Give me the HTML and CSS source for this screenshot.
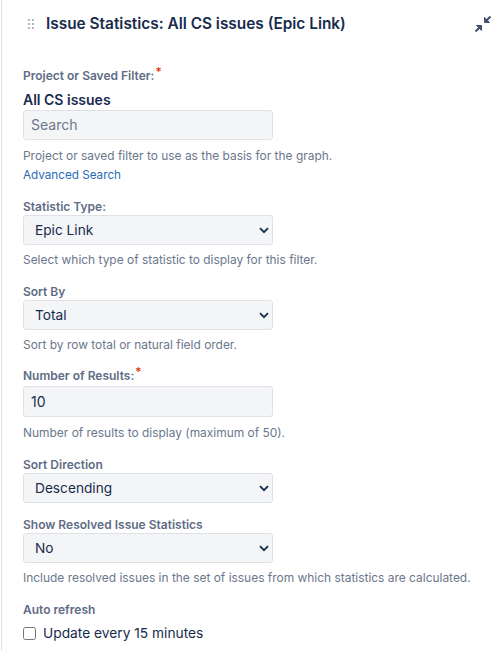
FILE: index.html
```html
<!DOCTYPE html>
<html lang="en">
<head>
<meta charset="utf-8">
<title>Issue Statistics</title>
<link rel="stylesheet" href="styles.css">
</head>
<body>
<main class="panel">
  <header class="head">
    <svg class="grip" width="6" height="10" viewBox="0 0 6 10"><g fill="#b3bac5"><rect x="0" y="0" width="2" height="2"/><rect x="4" y="0" width="2" height="2"/><rect x="0" y="4" width="2" height="2"/><rect x="4" y="4" width="2" height="2"/><rect x="0" y="8" width="2" height="2"/><rect x="4" y="8" width="2" height="2"/></g></svg>
    <h1 class="title">Issue Statistics: All CS issues (Epic Link)</h1>
    <svg class="collapse" width="16" height="16" viewBox="0 0 16 16"><g fill="#42526e" stroke="#42526e" stroke-linejoin="round"><path d="M9.5 1.5V6.5H14.5z" stroke-width="1"/><path d="M6.5 9.5H1.5L6.5 14.5z" stroke-width="1"/><path d="M15.5.5L11 5M.5 15.5L5 11" stroke-width="2"/></g></svg>
  </header>
  <form class="form">
    <div class="field f-project">
      <label class="label">Project or Saved Filter:<span class="req">*</span></label>
      <div class="picked">All CS issues</div>
      <input class="input" type="text" placeholder="Search">
      <p class="hint h-gap">Project or saved filter to use as the basis for the graph.</p>
      <a class="link" href="#">Advanced Search</a>
    </div>
    <div class="field f-type">
      <label class="label">Statistic Type:</label>
      <div class="select"><select><option>Epic Link</option></select><svg class="chev" width="10" height="7" viewBox="0 0 10 7"><path d="M1 1.2l4 4 4-4" fill="none" stroke="#172b4d" stroke-width="1.8"/></svg></div>
      <p class="hint">Select which type of statistic to display for this filter.</p>
    </div>
    <div class="field f-sort">
      <label class="label">Sort By</label>
      <div class="select"><select><option>Total</option></select><svg class="chev" width="10" height="7" viewBox="0 0 10 7"><path d="M1 1.2l4 4 4-4" fill="none" stroke="#172b4d" stroke-width="1.8"/></svg></div>
      <p class="hint">Sort by row total or natural field order.</p>
    </div>
    <div class="field f-num">
      <label class="label">Number of Results:<span class="req">*</span></label>
      <input class="input value" type="text" value="10">
      <p class="hint h-gap">Number of results to display (maximum of 50).</p>
    </div>
    <div class="field f-dir">
      <label class="label">Sort Direction</label>
      <div class="select"><select><option>Descending</option></select><svg class="chev" width="10" height="7" viewBox="0 0 10 7"><path d="M1 1.2l4 4 4-4" fill="none" stroke="#172b4d" stroke-width="1.8"/></svg></div>
    </div>
    <div class="field f-res">
      <label class="label">Show Resolved Issue Statistics</label>
      <div class="select"><select><option>No</option></select><svg class="chev" width="10" height="7" viewBox="0 0 10 7"><path d="M1 1.2l4 4 4-4" fill="none" stroke="#172b4d" stroke-width="1.8"/></svg></div>
      <p class="hint">Include resolved issues in the set of issues from which statistics are calculated.</p>
    </div>
    <div class="field f-auto">
      <label class="label">Auto refresh</label>
      <label class="check"><input type="checkbox"><span>Update every 15 minutes</span></label>
    </div>
  </form>
</main>
</body>
</html>
```
FILE: styles.css
```css
* { box-sizing: border-box; }
html, body { margin: 0; height: 100%; overflow: hidden; background: #fff; }
body { font-family: Inter, "Liberation Sans", sans-serif; color: #172b4d; }
.panel { margin-left: 1px; border-left: 1px solid #dfe1e6; min-height: 651px; padding: 0 0 0 21px; }
.head { display: flex; align-items: center; height: 48px; }
.grip { margin-left: 5px; flex: none; }
.title { margin: 0 0 0 12px; font-size: 15.4px; font-weight: 600; line-height: 20px; color: #172b4d; white-space: nowrap; }
.collapse { margin-left: auto; flex: none; margin-top: -1px; }
.form { display: flex; flex-direction: column; padding-top: 20px; }
.field { display: flex; flex-direction: column; align-items: flex-start; }
.label { font-size: 12px; font-weight: 600; line-height: 16px; color: #5e6c84; }
.req { color: #de350b; position: relative; top: -4px; margin-left: 1px; font-weight: 500; }
.picked { font-size: 14px; font-weight: 600; line-height: 20px; margin-top: 6px; }
.input, .select select { width: 250px; height: 30px; background: #f4f5f7; border: 1px solid #dfe1e6; border-radius: 3px; font: 13.7px Inter, sans-serif; color: #172b4d; outline: none; }
.input { padding: 0 7px 2px; font-size: 14px; }
.input::placeholder { color: #6b778c; opacity: 1; }
.input.value { height: 31px; margin-top: 2px; padding-bottom: 0; }
.select { position: relative; width: 250px; height: 30px; }
.select select { display: block; appearance: none; -webkit-appearance: none; padding: 0 24px 0 11px; }
.chev { position: absolute; right: 4px; top: 12px; pointer-events: none; }
.hint { margin: 7px 0 0; font-size: 11.95px; line-height: 16px; color: #6b778c; white-space: nowrap; }
.h-gap { margin-top: 8px; }
.link { margin-top: 3px; font-size: 11.7px; line-height: 16px; color: #2a6bb8; text-decoration: none; }
.f-type { margin-top: 16px; }
.f-sort { margin-top: 16px; }
.f-num { margin-top: 15px; }
.f-dir { margin-top: 16px; }
.f-res { margin-top: 14px; }
.f-auto { margin-top: 16px; }
.check { display: flex; align-items: center; margin-top: 5px; font-size: 13.75px; line-height: 20px; color: #172b4d; }
.check input { margin: 0 7px 0 0; width: 13px; height: 13px; appearance: none; -webkit-appearance: none; background: #fff; border: 1px solid #767676; border-radius: 2.5px; }
```
